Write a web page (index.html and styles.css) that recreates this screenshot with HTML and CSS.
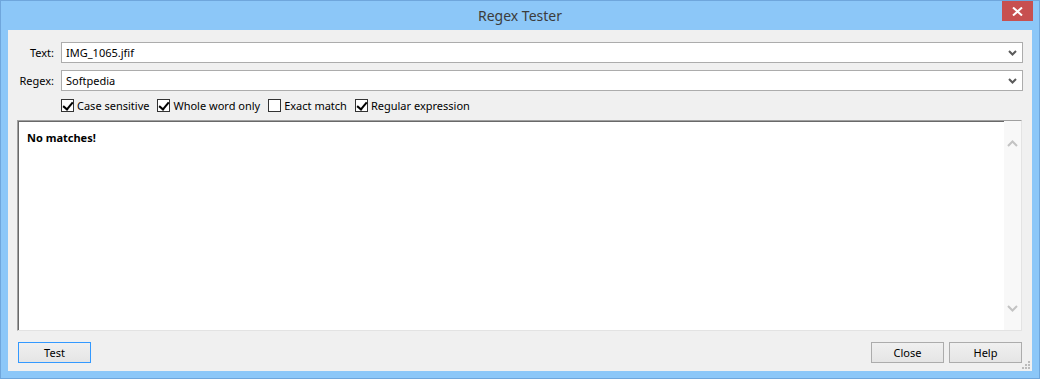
FILE: index.html
```html
<!DOCTYPE html>
<html lang="en">
<head>
  <meta charset="UTF-8">
  <title>Regex Tester</title>
  <link rel="stylesheet" href="styles.css">
</head>
<body>
  <div class="window">
    <!-- Title bar -->
    <div class="titlebar">
      <span class="title">Regex Tester</span>
      <div class="close-btn">
        <svg width="11" height="9" viewBox="0 0 11 9">
          <path d="M1 0.5 L10 8.5 M10 0.5 L1 8.5" stroke="#fff" stroke-width="2"/>
        </svg>
      </div>
    </div>

    <!-- Client area -->
    <div class="client">
      <div class="fields">
        <label class="field-label">Text:</label>
        <div class="combo">
          <span class="combo-value">IMG_1065.jfif</span>
          <svg class="combo-arrow" width="9" height="6" viewBox="0 0 9 6">
            <path d="M1 1 L4.5 4.5 L8 1" fill="none" stroke="#5a5a5a" stroke-width="2"/>
          </svg>
        </div>

        <label class="field-label">Regex:</label>
        <div class="combo">
          <span class="combo-value">Softpedia</span>
          <svg class="combo-arrow" width="9" height="6" viewBox="0 0 9 6">
            <path d="M1 1 L4.5 4.5 L8 1" fill="none" stroke="#5a5a5a" stroke-width="2"/>
          </svg>
        </div>
      </div>

      <div class="options">
        <div class="option">
          <span class="box checked"></span>
          <span>Case sensitive</span>
        </div>
        <div class="option">
          <span class="box checked"></span>
          <span>Whole word only</span>
        </div>
        <div class="option">
          <span class="box"></span>
          <span>Exact match</span>
        </div>
        <div class="option">
          <span class="box checked"></span>
          <span>Regular expression</span>
        </div>
      </div>

      <!-- Result box -->
      <div class="result">
        <div class="result-text">No matches!</div>
        <div class="scrollbar">
          <svg width="11" height="7" viewBox="0 0 11 7">
            <path d="M1 6 L5.5 1.5 L10 6" fill="none" stroke="#c3c3c3" stroke-width="2"/>
          </svg>
          <svg width="11" height="7" viewBox="0 0 11 7">
            <path d="M1 1 L5.5 5.5 L10 1" fill="none" stroke="#c3c3c3" stroke-width="2"/>
          </svg>
        </div>
      </div>

      <div class="buttons">
        <button class="btn btn-default">Test</button>
        <div class="spacer"></div>
        <button class="btn">Close</button>
        <button class="btn">Help</button>
      </div>

      <svg class="grip" width="8" height="8" viewBox="0 0 8 8">
        <rect x="6" y="0" width="2" height="2" fill="#bcbcbc"/>
        <rect x="3" y="3" width="2" height="2" fill="#bcbcbc"/>
        <rect x="6" y="3" width="2" height="2" fill="#bcbcbc"/>
        <rect x="0" y="6" width="2" height="2" fill="#bcbcbc"/>
        <rect x="3" y="6" width="2" height="2" fill="#bcbcbc"/>
        <rect x="6" y="6" width="2" height="2" fill="#bcbcbc"/>
      </svg>
    </div>
  </div>
</body>
</html>
```

FILE: styles.css
```css
* {
  box-sizing: border-box;
}

html, body {
  margin: 0;
  padding: 0;
  width: 1040px;
  height: 379px;
  overflow: hidden;
  font-family: "Noto Sans", "Open Sans", sans-serif;
  font-size: 11px;
  color: #000;
}

/* Window frame */
.window {
  width: 1040px;
  height: 379px;
  display: flex;
  flex-direction: column;
  background: #8cc7f8;
  border: 1px solid #6fa6dc;
}

.titlebar {
  position: relative;
  height: 29px;
  display: flex;
  justify-content: center;
  align-items: center;
}

.title {
  font-size: 14px;
  color: #3c3c3c;
  padding-bottom: 1px;
}

.close-btn {
  position: absolute;
  top: 0;
  right: 6px;
  width: 31px;
  height: 20px;
  background: #c75050;
  display: flex;
  justify-content: center;
  align-items: center;
}

/* Client area */
.client {
  position: relative;
  flex: 1;
  margin: 0 7px 7px 7px;
  background: #f0f0f0;
  padding: 12px 9px 8px 9px;
  display: flex;
  flex-direction: column;
}

.fields {
  display: grid;
  grid-template-columns: 37px 1fr;
  column-gap: 7px;
  row-gap: 7px;
}

.field-label {
  text-align: right;
  align-self: center;
  color: #000;
}

.combo {
  height: 21px;
  background: #fff;
  border: 1px solid #acacac;
  display: flex;
  align-items: center;
  padding: 0 5px 0 4px;
}

.combo-value {
  flex: 1;
}

/* Checkboxes */
.options {
  display: flex;
  align-items: center;
  margin: 7px 0 0 44px;
  height: 15px;
}

.option {
  display: flex;
  align-items: center;
  gap: 3px;
  margin-right: 8px;
}

.box {
  width: 13px;
  height: 13px;
  border: 1px solid #333;
  background: #fff;
  position: relative;
}

.box.checked::after {
  content: "";
  position: absolute;
  left: 3px;
  top: 0px;
  width: 4px;
  height: 8px;
  border: solid #000;
  border-width: 0 2px 2px 0;
  transform: rotate(40deg);
}

/* Result area */
.result {
  flex: 1;
  margin-top: 7px;
  margin-right: 1px;
  background: #fff;
  border: 1px solid;
  border-color: #a0a0a0 #e3e3e3 #e3e3e3 #a0a0a0;
  box-shadow: inset 1px 1px 0 #696969;
  display: flex;
}

.result-text {
  flex: 1;
  font-weight: bold;
  padding: 9px 0 0 9px;
}

.scrollbar {
  width: 17px;
  background: #f8f8f8;
  display: flex;
  flex-direction: column;
  justify-content: space-between;
  align-items: center;
  padding: 19px 0 18px;
}

/* Buttons */
.buttons {
  display: flex;
  gap: 5px;
  margin-top: 11px;
  padding: 0 1px 0 1px;
}

.spacer {
  flex: 1;
}

.btn {
  width: 73px;
  height: 21px;
  font-family: inherit;
  font-size: 11px;
  color: #000;
  background: linear-gradient(#f0f0f0, #e5e5e5);
  border: 1px solid #acacac;
  padding: 0;
}

.btn-default {
  border-color: #3399ff;
}

.grip {
  position: absolute;
  right: 2px;
  bottom: 2px;
}
```
